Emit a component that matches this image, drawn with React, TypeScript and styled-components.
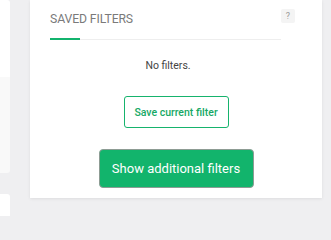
import styled, { createGlobalStyle } from 'styled-components';

const GlobalStyle = createGlobalStyle`
  html, body {
    margin: 0;
    padding: 0;
    background: #efeff1;
    font-family: Roboto, "Liberation Sans", sans-serif;
    overflow: hidden;
  }
`;

function App() {
  return (
    <>
      <GlobalStyle />
      <Page>
        <SideColumn>
          <SideCard>
            <SideTop />
            <SideFooter />
          </SideCard>
          <SideCard>
            <SideTop />
          </SideCard>
        </SideColumn>
        <Card>
          <Header>
            <Tabs>
              <TabTitle>SAVED FILTERS</TabTitle>
              <TabIndicator />
            </Tabs>
            <HelpBadge>?</HelpBadge>
          </Header>
          <Body>
            <EmptyText>No filters.</EmptyText>
            <OutlineButton>Save current filter</OutlineButton>
            <PrimaryButton>Show additional filters</PrimaryButton>
          </Body>
        </Card>
      </Page>
    </>
  );
}
export default App;

const Page = styled.div`
  display: flex;
  align-items: flex-start;
  gap: 20px;
  width: 331px;
  height: 216px;
  overflow: hidden;
`;

const SideColumn = styled.div`
  width: 10px;
  display: flex;
  flex-direction: column;
  gap: 21px;
  flex-shrink: 0;
`;

const SideCard = styled.div`
  display: flex;
  flex-direction: column;
  border-radius: 0 3px 3px 0;
  overflow: hidden;
`;

const SideTop = styled.div`
  height: 77px;
  background: #ffffff;
`;

const SideFooter = styled.div`
  height: 96px;
  background: #f9f9f9;
`;

const Card = styled.div`
  width: 292px;
  flex-shrink: 0;
  background: #ffffff;
  box-shadow: 0 1px 3px rgba(0, 0, 0, 0.08);
  padding: 0 27px 10px 20px;
  box-sizing: border-box;
`;

const Header = styled.div`
  display: flex;
  align-items: flex-start;
`;

const Tabs = styled.div`
  flex: 1;
  border-bottom: 1px solid #eeeeee;
  padding-top: 12px;
`;

const TabTitle = styled.div`
  font-size: 12.2px;
  line-height: 15px;
  color: #7a7a7a;
  letter-spacing: -0.1px;
`;

const TabIndicator = styled.div`
  width: 30px;
  height: 2px;
  margin-top: 11px;
  margin-bottom: -1px;
  background: #13b36d;
`;

const HelpBadge = styled.div`
  width: 14px;
  height: 14px;
  margin-top: 9px;
  border-radius: 2px;
  background: #f4f4f4;
  color: #9a9a9a;
  font-size: 9px;
  line-height: 14px;
  text-align: center;
`;

const Body = styled.div`
  display: flex;
  flex-direction: column;
  align-items: center;
  padding-left: 7px;
`;

const EmptyText = styled.div`
  margin-top: 19px;
  margin-right: 16px;
  font-size: 10.5px;
  line-height: 13px;
  color: #444444;
`;

const OutlineButton = styled.button`
  margin-top: 24px;
  width: 105px;
  height: 32px;
  border: 1px solid #16b36d;
  border-radius: 3px;
  background: #ffffff;
  color: #16a865;
  font-family: Roboto, "Liberation Sans", sans-serif;
  font-size: 10.5px;
  font-weight: 500;
  padding: 0;
  cursor: pointer;
`;

const PrimaryButton = styled.button`
  margin-top: 21px;
  width: 155px;
  height: 39px;
  border: 1px solid #8d9c94;
  border-radius: 4px;
  background: #12b46c;
  color: #ffffff;
  font-family: Roboto, "Liberation Sans", sans-serif;
  font-size: 13px;
  padding: 0;
  cursor: pointer;
`;
